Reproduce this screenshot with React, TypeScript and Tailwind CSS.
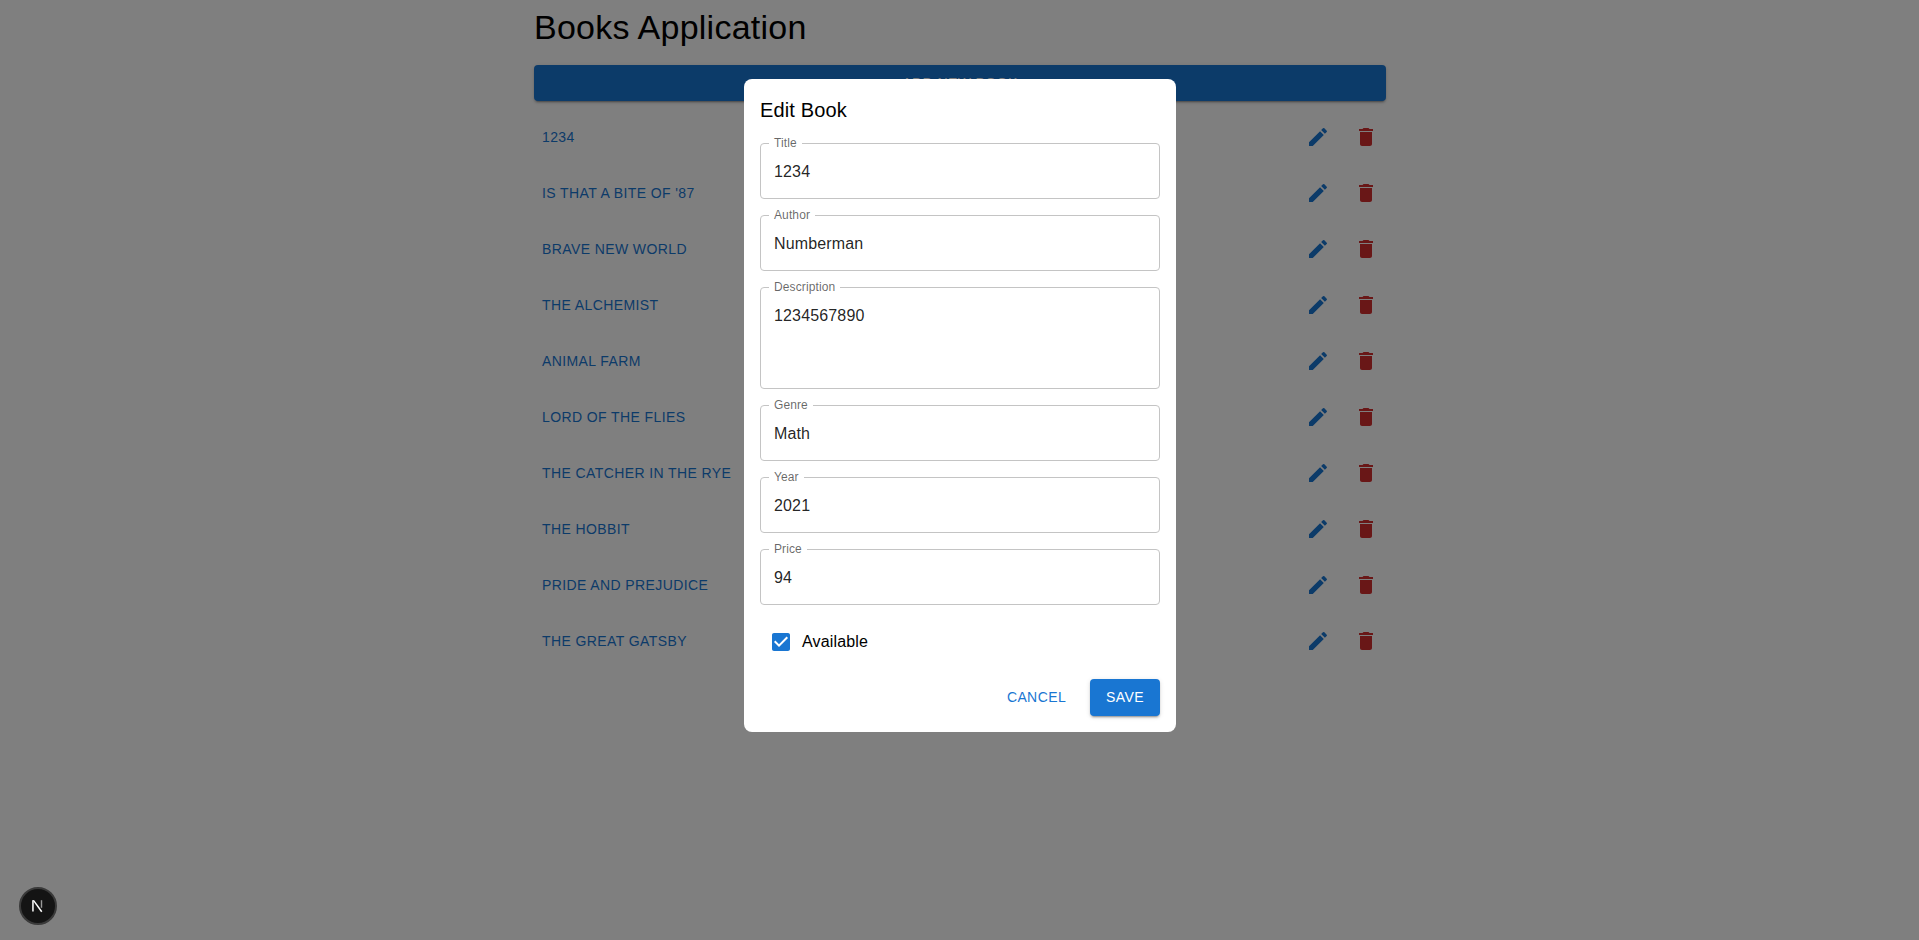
const books = ["1234", "Is That a Bite of '87", "Brave New World", "The Alchemist", "Animal Farm", "Lord of the Flies", "The Catcher in the Rye", "The Hobbit", "Pride and Prejudice", "The Great Gatsby"];

function EditIcon() {
  return (
    <svg viewBox="0 0 24 24" className="w-6 h-6 fill-[#1976d2]">
      <path d="M3 17.25V21h3.75L17.81 9.94l-3.75-3.75zM20.71 7.04c.39-.39.39-1.02 0-1.41l-2.34-2.34a.9959.9959 0 0 0-1.41 0l-1.83 1.83 3.75 3.75z" />
    </svg>
  );
}

function DeleteIcon() {
  return (
    <svg viewBox="0 0 24 24" className="w-6 h-6 fill-[#d32f2f]">
      <path d="M6 19c0 1.1.9 2 2 2h8c1.1 0 2-.9 2-2V7H6zM19 4h-3.5l-1-1h-5l-1 1H5v2h14z" />
    </svg>
  );
}

function Field({ label, value, tall }: { label: string; value: string; tall?: boolean }) {
  return (
    <div className={`relative rounded-[4px] border border-[#c4c4c4] px-[13px] text-[16px] leading-[23px] tracking-[0.15px] text-black/[0.87] ${tall ? "h-[102px] pt-[16px]" : "h-[56px] py-[16px]"}`}>
      <span className="absolute -top-[8px] left-[8px] bg-white px-[5px] text-[12px] leading-[14px] tracking-[0.11px] text-black/60">{label}</span>
      {value}
    </div>
  );
}

export default function App() {
  return (
    <div className="min-h-[940px] bg-white pl-[1px] font-['Liberation_Sans',Arial,sans-serif]">
      <main className="mx-auto w-[852px] pt-[6px]">
        <h1 className="mb-[17px] text-[34px] leading-[42px] tracking-[0.25px] text-black">Books Application</h1>
        <button className="flex h-[36px] w-full items-center justify-center rounded-[4px] bg-[#1976d2] text-[14px] font-medium tracking-[0.4px] text-white uppercase shadow-[0_3px_1px_-2px_rgba(0,0,0,0.2),0_2px_2px_0_rgba(0,0,0,0.14),0_1px_5px_0_rgba(0,0,0,0.12)]">
          Add New Book
        </button>
        <ul className="mt-[8px]">
          {books.map((b) => (
            <li key={b} className="flex h-[56px] items-center justify-between">
              <span className="px-[8px] text-[14px] tracking-[0.4px] text-[#1976d2] uppercase">{b}</span>
              <div className="flex gap-[8px]">
                <span className="flex h-[40px] w-[40px] items-center justify-center"><EditIcon /></span>
                <span className="flex h-[40px] w-[40px] items-center justify-center"><DeleteIcon /></span>
              </div>
            </li>
          ))}
        </ul>
      </main>

      <div className="fixed inset-0 flex justify-center bg-black/50 pt-[79px] pl-[1px]">
        <div className="h-[653px] w-[432px] rounded-[8px] bg-white p-[16px]">
          <h2 className="text-[20px] leading-[30px] tracking-[0.15px] text-black">Edit Book</h2>
          <div className="mt-[18px] flex flex-col gap-[16px]">
            <Field label="Title" value="1234" />
            <Field label="Author" value="Numberman" />
            <Field label="Description" value="1234567890" tall />
            <Field label="Genre" value="Math" />
            <Field label="Year" value="2021" />
            <Field label="Price" value="94" />
          </div>
          <div className="mt-[16px] flex h-[42px] items-center pl-[9px]">
            <svg viewBox="0 0 24 24" className="h-6 w-6 fill-[#1976d2]">
              <path d="M19 3H5c-1.11 0-2 .9-2 2v14c0 1.1.89 2 2 2h14c1.11 0 2-.9 2-2V5c0-1.1-.89-2-2-2m-9 14-5-5 1.41-1.41L10 14.17l7.59-7.59L19 8z" />
            </svg>
            <span className="ml-[9px] text-[16px] tracking-[0.15px] text-black">Available</span>
          </div>
          <div className="mt-[16px] flex items-center justify-end gap-[16px]">
            <button className="h-[36.5px] rounded-[4px] px-[8px] text-[14px] tracking-[0.4px] text-[#1976d2] uppercase">Cancel</button>
            <button className="h-[36.5px] rounded-[4px] bg-[#1976d2] px-[16px] text-[14px] tracking-[0.4px] text-white uppercase shadow-[0_3px_1px_-2px_rgba(0,0,0,0.2),0_2px_2px_0_rgba(0,0,0,0.14),0_1px_5px_0_rgba(0,0,0,0.12)]">Save</button>
          </div>
        </div>
      </div>

      <div className="fixed bottom-[15px] left-[19px] flex h-[38px] w-[38px] items-center justify-center rounded-full border-2 border-[#3a3a3a] bg-[#141414]">
        <svg viewBox="0 0 14 14" className="h-[14px] w-[14px]">
          <path d="M1.2 1.2h1.5v11.4H1.2z" fill="#fff" />
          <path d="M1.6 1.2h1.6l8.2 11-1.3 1z" fill="#fff" />
          <path d="M9.8 1.2h1.4v7.6H9.8z" fill="#999" />
        </svg>
      </div>
    </div>
  );
}
